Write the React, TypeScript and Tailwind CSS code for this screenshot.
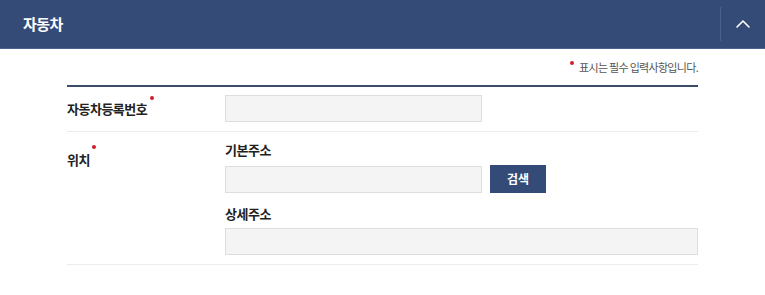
import { ChevronUp } from 'lucide-react'

const font = { fontFamily: '"Noto Sans CJK KR", "Noto Sans", sans-serif' }

function Required({ className }: { className: string }) {
  return <span className={`absolute block size-[4px] rounded-full bg-[#d0202a] ${className}`} />
}

function Field({ wide }: { wide?: boolean }) {
  return (
    <div
      className={`h-[27px] border border-[#dedede] bg-[#f4f4f4] ${wide ? 'w-full' : 'w-[257px]'}`}
    />
  )
}

export default function App() {
  return (
    <div className="h-[295px] w-[765px] bg-white" style={font}>
      <div className="flex h-[49px] items-center border-b border-[#4d6290] bg-[#344b78]">
        <h2 className="flex-1 pl-[23px] text-[15px] font-bold tracking-[-0.5px] text-white">자동차</h2>
        <div className="h-[34px] w-px bg-[#4a5f8b]" />
        <button className="flex w-[44px] items-center justify-center text-white">
          <ChevronUp className="size-[24px]" strokeWidth={1.6} />
        </button>
      </div>

      <div className="px-[67px]">
        <div className="flex h-[36px] items-center justify-end">
          <p className="relative pt-[1px] text-[11px] tracking-[-0.7px] text-[#555]">
            <Required className="-left-[9px] top-[3px]" />
            표시는 필수 입력사항입니다.
          </p>
        </div>

        <div className="border-t-2 border-[#3d4b6b]">
          <div className="flex h-[45px] items-start border-b border-[#ececec] pt-[8px]">
            <div className="flex h-[27px] w-[158px] items-center">
              <span className="relative text-[13px] font-bold tracking-[-0.5px] text-[#222]">
                자동차등록번호
                <Required className="-right-[7px] top-[-3px]" />
              </span>
            </div>
            <Field />
          </div>

          <div className="flex items-start border-b border-[#ececec] pb-[9px] pt-[9px]">
            <div className="w-[158px] pt-[5px]">
              <span className="relative text-[13px] font-bold leading-[20px] tracking-[-0.5px] text-[#222]">
                위치
                <Required className="-right-[6px] top-[-5px]" />
              </span>
            </div>
            <div className="flex-1">
              <p className="text-[13px] font-bold leading-[18px] tracking-[-0.5px] text-[#222]">기본주소</p>
              <div className="mt-[6px] flex items-center gap-[8px]">
                <Field />
                <button className="h-[28px] w-[56px] bg-[#344b78] text-[12px] font-bold text-white">검색</button>
              </div>
              <p className="mt-[12px] text-[13px] font-bold leading-[18px] tracking-[-0.5px] text-[#222]">상세주소</p>
              <div className="mt-[5px]">
                <Field wide />
              </div>
            </div>
          </div>
        </div>
      </div>
    </div>
  )
}
